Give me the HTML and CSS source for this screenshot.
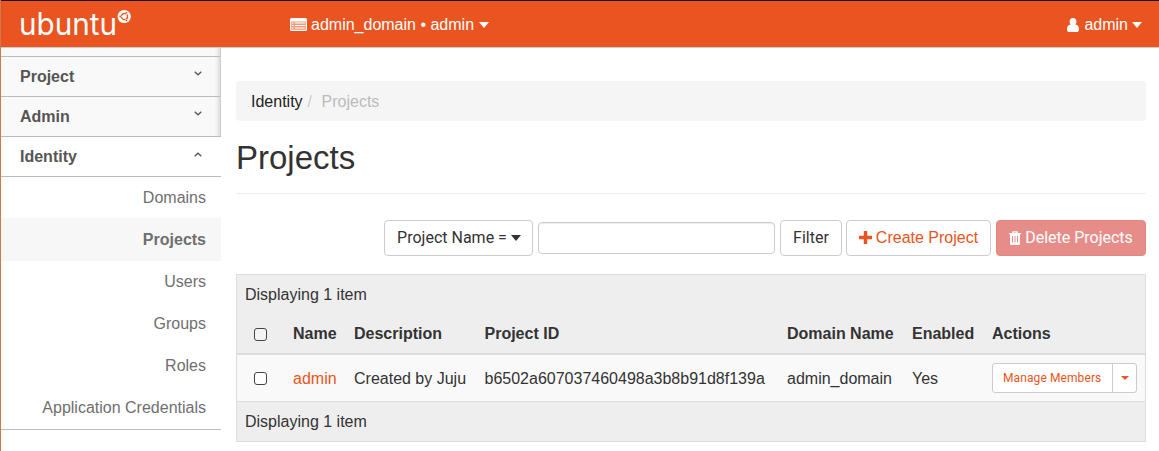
FILE: index.html
```html
<!DOCTYPE html>
<html lang="en">
<head>
<meta charset="utf-8">
<title>Projects</title>
<link rel="stylesheet" href="styles.css">
</head>
<body>
<div class="window">
<header class="topbar">
  <svg class="logo" width="116" height="44" viewBox="0 0 116 44" aria-label="ubuntu">
    <text class="wordmark" x="-1" y="33.5" textLength="98" lengthAdjust="spacingAndGlyphs">ubuntu</text>
    <circle cx="104.200" cy="15.500" r="6.600" fill="#fff"/>
    <circle cx="104.500" cy="15.500" r="3" fill="none" stroke="#e95420" stroke-width="1.300" stroke-dasharray="5.200 1.083" stroke-dashoffset="-.54" transform="rotate(60 104.500 15.500)"/>
    <g fill="#e95420"><circle cx="100.300" cy="15.500" r=".9"/><circle cx="106.500" cy="11.700" r=".9"/><circle cx="106.500" cy="19.300" r=".9"/></g>
  </svg>
  <div class="context">
    <svg width="17" height="14" viewBox="0 0 17 14"><rect x="0" y="0" width="17" height="13" rx="1.600" fill="#fff"/><rect x="1.200" y="3.500" width="14.600" height="8.300" fill="#f39a7a"/><path d="M2 5h1.500M2 7.500h1.500M2 10h1.500M4.800 5h10M4.800 7.500h10M4.800 10h10" stroke="#fff" stroke-width="1.200"/></svg>
    <span>admin_domain • admin</span><i class="caret"></i>
  </div>
  <div class="user">
    <svg width="12" height="14" viewBox="0 0 12 14"><path fill="#fff" d="M6 0a3.600 3.600 0 0 1 3.400 3.600c0 1.200-.4 2.300-1 3 2.500.1 3.600 2 3.600 4.800 0 1.500-.9 2.600-2.300 2.600H2.300C.9 14 0 12.900 0 11.400 0 8.600 1.100 6.700 3.600 6.600c-.6-.7-1-1.800-1-3A3.600 3.600 0 0 1 6 0z"/></svg>
    <span>admin</span><i class="caret"></i>
  </div>
</header>
<div class="body">
  <nav class="sidebar">
    <div class="closed">
      <div class="group"><span>Project</span><svg width="8" height="5"><path d="M.7.7 4 3.800 7.300.7"/></svg></div>
      <div class="group"><span>Admin</span><svg width="8" height="5"><path d="M.7.7 4 3.800 7.300.7"/></svg></div>
    </div>
    <div class="group open"><span>Identity</span><svg width="8" height="5"><path d="M.7 4.300 4 1.200 7.300 4.300"/></svg></div>
    <ul class="items">
      <li>Domains</li><li class="active">Projects</li><li>Users</li><li>Groups</li><li>Roles</li><li>Application Credentials</li>
    </ul>
  </nav>
  <main class="content">
    <div class="crumbs"><span>Identity</span><span class="sep">/</span><span class="here">Projects</span></div>
    <h1>Projects</h1>
    <div class="toolbar">
      <button class="btn name">Project Name = <i class="caret"></i></button>
      <input class="query" type="text" aria-label="Filter value">
      <button class="btn filter">Filter</button>
      <a class="btn create"><svg width="13" height="13"><path d="M4.800 0h3.400v4.800H13v3.400H8.200V13H4.800V8.200H0V4.800h4.800z" fill="#e95420"/></svg>Create Project</a>
      <button class="btn delete"><svg width="12" height="14" viewBox="0 0 12 14"><path d="M4 2.200V.8h4v1.400M0 2.700h12" fill="none" stroke="#fff" stroke-width="1.300"/><path d="M1 3h10v9.500q0 1.500-1.400 1.500H2.400Q1 14 1 12.500z" fill="#fff"/><path d="M3.500 5v6.500M6 5v6.500M8.500 5v6.500" stroke="#e78d89" stroke-width="1"/></svg>Delete Projects</button>
    </div>
    <table>
      <colgroup><col class="c1"><col class="c2"><col class="c3"><col class="c4"><col class="c5"><col class="c6"><col></colgroup>
      <thead>
        <tr class="count"><td colspan="7">Displaying 1 item</td></tr>
        <tr class="heads"><th><i class="box"></i></th><th>Name</th><th>Description</th><th>Project ID</th><th>Domain Name</th><th>Enabled</th><th>Actions</th></tr>
      </thead>
      <tbody>
        <tr><td><i class="box"></i></td><td class="link">admin</td><td>Created by Juju</td><td>b6502a607037460498a3b8b91d8f139a</td><td>admin_domain</td><td>Yes</td><td><div class="split"><a>Manage Members</a><b><i class="caret"></i></b></div></td></tr>
      </tbody>
      <tfoot><tr><td colspan="7">Displaying 1 item</td></tr></tfoot>
    </table>
  </main>
</div>
</div>
</body>
</html>
```
FILE: styles.css
```css
* { box-sizing: border-box; }
body { margin: 0; background: #fff; color: #333; font: 16px/22px "Liberation Sans", Arial, sans-serif; overflow: hidden; }
.window { height: 451px; border-left: 1px solid #d0784c; }
.topbar { height: 48px; border-top: 1px solid #1d1512; border-bottom: 1px solid #ccc; background: #e95420; color: #fff; display: flex; align-items: flex-start; padding: 0 17px 0 19px; }
.logo { overflow: visible; }
.wordmark { font: 400 31px Inter, sans-serif; fill: #fff; }
.context, .user { display: flex; align-items: center; height: 46px; padding-top: 1px; }
.context { margin-left: 154px; }
.context svg { margin-right: 4px; }
.user { margin-left: auto; }
.user svg { margin-right: 5px; }
.caret { display: inline-block; border: 5px solid transparent; border-top: 6px solid currentColor; border-bottom: 0; margin-left: 5px; vertical-align: middle; }
.topbar .caret { margin-left: 5px; }
.topbar .user .caret { margin-left: 4px; }
.body { display: flex; }
.sidebar { width: 220px; flex: none; color: #555; }
.closed { padding-top: 8px; background: #f9f9f9; border-right: 1px solid #ccc; box-shadow: inset -5px 0 5px -4px #ccc; }
.group { height: 40px; border-top: 1px solid #bbb; padding: 0 19px; display: flex; justify-content: space-between; font-weight: bold; line-height: 39px; }
.closed .group { padding-right: 18px; }
.group svg { margin-top: 14px; fill: none; stroke: #555; stroke-width: 1.3; }
.group.open { height: 41px; border-bottom: 1px solid #bbb; }
.group.open svg { margin-top: 15px; }
.items { list-style: none; margin: 0; padding: 0; border-bottom: 1px solid #bbb; text-align: right; color: #6f6f6f; }
.items li { height: 42px; line-height: 42px; padding-right: 15px; }
.items li:first-child { height: 41px; line-height: 41px; }
.items .active { background: #f7f7f7; font-weight: bold; height: 43px; line-height: 43px; }
.items .active + li { line-height: 41px; }
.content { flex: 1; padding: 33px 13px 0 15px; }
.crumbs { height: 40px; border-radius: 4px; background: #f5f5f5; padding: 1px 15px 0; line-height: 40px; color: #222; display: flex; }
.crumbs .sep { color: #ccc; margin: 0 9.5px 0 5px; }
.crumbs .here { color: #bbb; }
h1 { font-size: 33px; line-height: 42px; font-weight: normal; margin: 16px 0 0; height: 57px; border-bottom: 1px solid #eee; }
.toolbar { display: flex; justify-content: flex-end; align-items: center; gap: 5px; margin-top: 26px; height: 36px; }
.btn { height: 36px; border: 1px solid #ccc; border-radius: 4px; background: #fff; color: #333; font: 16px/22px Roboto, sans-serif; padding: 0; display: flex; align-items: center; justify-content: center; }
.name { width: 149px; padding-left: 1px; }
.name .caret { margin-left: 4px; }
.query { width: 237px; height: 32px; border: 1px solid #ccc; border-radius: 4px; box-shadow: inset 0 1px 1px rgba(0,0,0,.075); padding: 0 8px; }
.filter { width: 62px; margin-right: -1px; }
.create { width: 145px; color: #e95420; font-family: "Liberation Sans", Arial, sans-serif; }
.create svg, .delete svg { margin-right: 4px; }
.create svg { margin-top: -2px; }
.delete svg { margin-top: -1px; }
.delete { width: 150px; color: #fff; background: #e78d89; border-color: #e38480; }
table { width: 910px; table-layout: fixed; margin-top: 18px; border: 1px solid #ddd; border-spacing: 0; background: #eee; }
.c1 { width: 48px; } .c2 { width: 61px; } .c3 { width: 130.5px; } .c4 { width: 302.5px; } .c5 { width: 125px; } .c6 { width: 80px; }
td, th { padding: 0 0 0 8px; text-align: left; white-space: nowrap; vertical-align: middle; }
.count td { height: 39px; }
.heads th { height: 41px; border-bottom: 2px solid #ddd; }
tbody td { height: 46px; padding-top: 1px; background: #f9f9f9; }
tfoot td { height: 40px; border-top: 1px solid #ddd; }
.box { display: block; width: 13px; height: 13px; margin: 2px 0 0 9px; border: 1.5px solid #444; border-radius: 3px; background: #fff; }
tbody .box { margin-top: 0; }
.heads .box { background: #f4f4f4; }
.link { color: #e95420; }
.split { display: flex; width: 145px; height: 30px; margin-top: -2px; border: 1px solid #ccc; border-radius: 3px; background: #fff; color: #e95420; font: 12px/28px Roboto, sans-serif; letter-spacing: .1px; }
.split a { width: 119px; padding-left: 10px; }
.split b { flex: 1; border-left: 1px solid #ccc; display: flex; align-items: center; justify-content: center; }
.split .caret { margin: 0; border-width: 4px 4px 0; }
```
